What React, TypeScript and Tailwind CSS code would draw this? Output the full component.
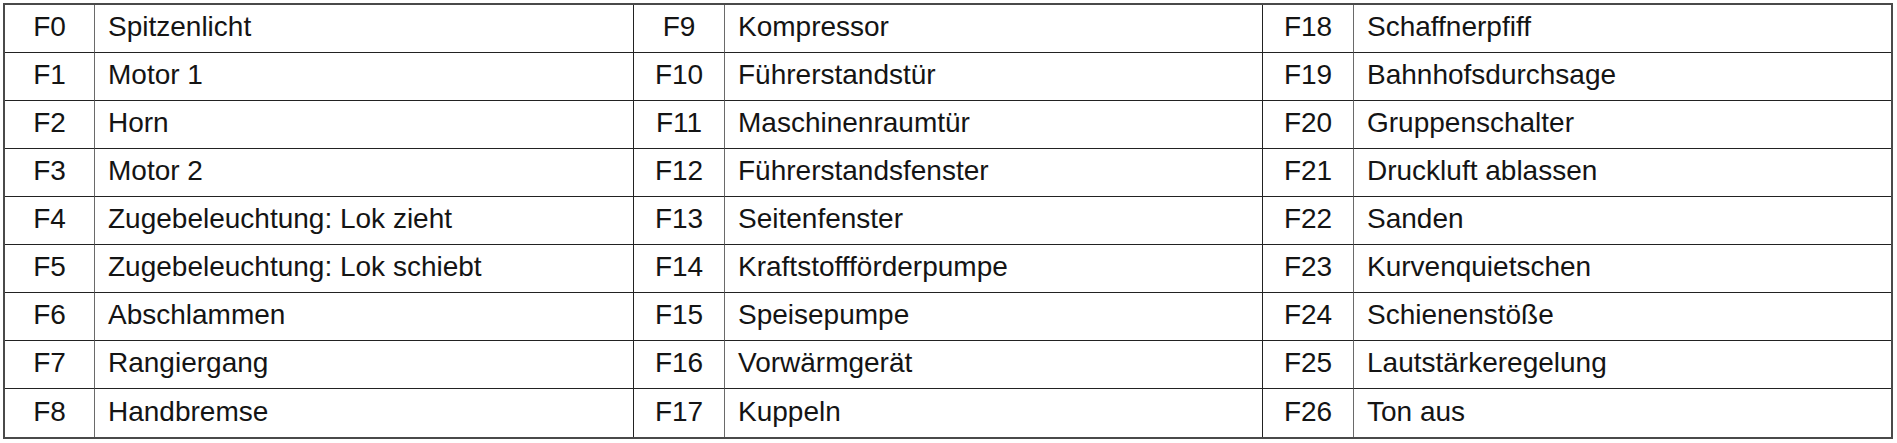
import { Fragment } from "react";

const groups: [string, string][][] = [
  [
    ["F0", "Spitzenlicht"],
    ["F1", "Motor 1"],
    ["F2", "Horn"],
    ["F3", "Motor 2"],
    ["F4", "Zugebeleuchtung: Lok zieht"],
    ["F5", "Zugebeleuchtung: Lok schiebt"],
    ["F6", "Abschlammen"],
    ["F7", "Rangiergang"],
    ["F8", "Handbremse"],
  ],
  [
    ["F9", "Kompressor"],
    ["F10", "Führerstandstür"],
    ["F11", "Maschinenraumtür"],
    ["F12", "Führerstandsfenster"],
    ["F13", "Seitenfenster"],
    ["F14", "Kraftstoffförderpumpe"],
    ["F15", "Speisepumpe"],
    ["F16", "Vorwärmgerät"],
    ["F17", "Kuppeln"],
  ],
  [
    ["F18", "Schaffnerpfiff"],
    ["F19", "Bahnhofsdurchsage"],
    ["F20", "Gruppenschalter"],
    ["F21", "Druckluft ablassen"],
    ["F22", "Sanden"],
    ["F23", "Kurvenquietschen"],
    ["F24", "Schienenstöße"],
    ["F25", "Lautstärkeregelung"],
    ["F26", "Ton aus"],
  ],
];

export default function App() {
  const rows = groups[0].map((_, i) => groups.map((g) => g[i]));

  return (
    <div className="w-[1897px] h-[443px] bg-white pt-[3px] pl-[3px]" style={{ fontFamily: '"Liberation Sans", Arial, sans-serif' }}>
      <div className="w-[1890px] border-2 border-[#4a4a4a] grid grid-cols-[90px_539px_91px_538px_91px_537px] text-[28px] text-[#141414] leading-none">
        {rows.map((row, r) =>
          row.map(([code, name], g) => (
            <Fragment key={`${r}-${g}`}>
              <div
                className={`h-[48px] flex items-center justify-center pb-[3px] border-r border-r-[#6a6a6a] ${r < rows.length - 1 ? "border-b border-b-[#222]" : ""}`}
              >
                {code}
              </div>
              <div
                className={`h-[48px] flex items-center pl-[13px] pb-[3px] ${g < 2 ? "border-r border-r-[#222]" : ""} ${r < rows.length - 1 ? "border-b border-b-[#222]" : ""}`}
              >
                {name}
              </div>
            </Fragment>
          ))
        )}
      </div>
    </div>
  );
}
